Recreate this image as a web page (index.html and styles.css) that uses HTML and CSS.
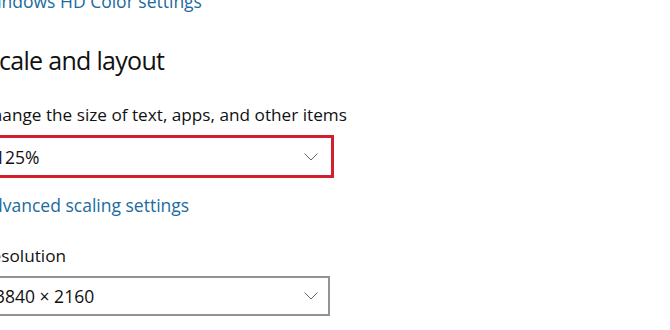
FILE: index.html
```html
<!DOCTYPE html>
<html lang="en">
<head>
    <meta charset="UTF-8">
    <title>Display settings</title>
    <link rel="stylesheet" href="styles.css">
</head>
<body>
    <div class="settings">
        <a class="link top-link" href="#">Windows HD Color settings</a>

        <h2>Scale and layout</h2>

        <div class="field">
            <label>Change the size of text, apps, and other items</label>
            <div class="dropdown highlighted">
                <span>125%</span>
                <svg class="chevron" viewBox="0 0 14 8" width="14" height="8">
                    <path d="M0.5 0.5 L7 7 L13.5 0.5" fill="none" stroke="#666" stroke-width="1"/>
                </svg>
            </div>
        </div>

        <a class="link" href="#">Advanced scaling settings</a>

        <div class="field">
            <label>Resolution</label>
            <div class="dropdown">
                <span>3840 × 2160</span>
                <svg class="chevron" viewBox="0 0 14 8" width="14" height="8">
                    <path d="M0.5 0.5 L7 7 L13.5 0.5" fill="none" stroke="#666" stroke-width="1"/>
                </svg>
            </div>
        </div>
    </div>
</body>
</html>
```

FILE: styles.css
```css
html, body {
    margin: 0;
    padding: 0;
    background: #ffffff;
    overflow: hidden;
}

body {
    font-family: "Open Sans", "Noto Sans", sans-serif;
    color: #111;
    width: 670px;
    height: 330px;
}

.settings {
    display: flex;
    flex-direction: column;
    align-items: flex-start;
    margin-left: -19px;
    margin-top: -11px;
}

.link {
    color: #206a9e;
    text-decoration: none;
    font-size: 17.5px;
    line-height: 24px;
}

.top-link {
    margin-bottom: 31px;
}

h2 {
    font-weight: 400;
    font-size: 25px;
    line-height: 32px;
    letter-spacing: -0.7px;
    margin: 0 0 27px 5px;
}

.field {
    display: flex;
    flex-direction: column;
}

.field label {
    font-size: 17.2px;
    line-height: 24px;
    margin-bottom: 8px;
}

.field + .link {
    margin-top: 15px;
    margin-bottom: 27px;
}

.dropdown {
    box-sizing: border-box;
    width: 349px;
    height: 40px;
    border: 2px solid #939393;
    display: flex;
    align-items: center;
    justify-content: space-between;
    padding: 0 10px 0 12px;
    font-size: 17.5px;
}

.dropdown.highlighted {
    border: 3px solid #d21f2d;
    width: 354px;
    height: 43px;
    margin-left: -1px;
    padding: 0 13px 0 12px;
}
```
